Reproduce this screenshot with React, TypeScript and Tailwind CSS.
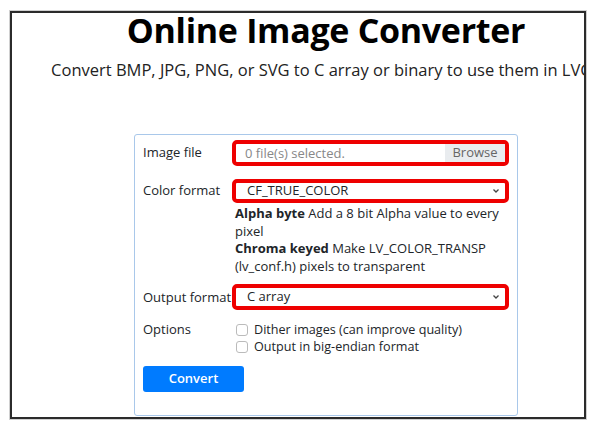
import React from "react";

export default function App() {
  const font = { fontFamily: '"Open Sans", "Noto Sans", sans-serif' };
  return (
    <div className="w-[599px] h-[427px] bg-white relative" style={font}>
      <div className="absolute left-[10px] top-[11px] w-[576px] h-[408px] border-2 border-[#2b2b2b] overflow-hidden bg-white shadow-[0_0_0_1px_#d0d0d0]">
        <div className="w-[628px] flex flex-col items-center text-black">
          <h1 className="text-[34px] font-bold leading-[34px] tracking-[-0.3px]">Online Image Converter</h1>
          <p className="mt-[13px] text-[16.5px] leading-[20px] whitespace-nowrap text-[#222]">
            Convert BMP, JPG, PNG, or SVG to C array or binary to use them in LVGL
          </p>
          <div className="mt-[54px] w-[384px] border border-[#a9c8ea] rounded-[3px] px-[8px] pt-[5px] pb-[23px] text-[13px] text-[#212529]">
            <div className="flex">
              <div className="w-[89px] pt-[3px] leading-[18px]">Image file</div>
              <div className="flex-1 border-[4px] border-[#ee0000] rounded-[5px] h-[26px] flex items-stretch overflow-hidden">
                <div className="flex-1 pl-[9px] text-[#888] leading-[18px] flex items-center">0 file(s) selected.</div>
                <div className="w-[60px] bg-[#e9ecef] text-[#666] flex items-center justify-center">Browse</div>
              </div>
            </div>
            <div className="flex mt-[13px]">
              <div className="w-[89px] pt-[2px] leading-[18px]">Color format</div>
              <div className="flex-1">
                <div className="border-[4px] border-[#ee0000] rounded-[5px] h-[24px] flex items-center pl-[11px] pr-[4px]">
                  <span className="flex-1">CF_TRUE_COLOR</span>
                  <svg width="8" height="6" viewBox="0 0 8 6" className="mr-[1px]"><path d="M1.5 1.5 L4 4 L6.5 1.5" stroke="#444" strokeWidth="1.3" fill="none" /></svg>
                </div>
                <div className="pl-[3px] pt-[2px] leading-[17.5px] pr-[8px]">
                  <div><b className="font-bold">Alpha byte</b> Add a 8 bit Alpha value to every pixel</div>
                  <div><b className="font-bold">Chroma keyed</b> Make LV_COLOR_TRANSP (lv_conf.h) pixels to transparent</div>
                </div>
              </div>
            </div>
            <div className="flex mt-[9px]">
              <div className="w-[89px] pt-[4px] leading-[18px] whitespace-nowrap">Output format</div>
              <div className="flex-1 border-[4px] border-[#ee0000] rounded-[5px] h-[26px] flex items-center pl-[11px] pr-[4px]">
                <span className="flex-1">C array</span>
                <svg width="8" height="6" viewBox="0 0 8 6" className="mr-[1px]"><path d="M1.5 1.5 L4 4 L6.5 1.5" stroke="#444" strokeWidth="1.3" fill="none" /></svg>
              </div>
            </div>
            <div className="flex mt-[11px]">
              <div className="w-[89px] leading-[17px]">Options</div>
              <div className="flex-1 pl-[4px] leading-[17px] text-[12.6px]">
                <label className="flex items-center gap-[6px]">
                  <span className="w-[12px] h-[12px] border border-[#bbb] rounded-[3px] bg-white" />
                  Dither images (can improve quality)
                </label>
                <label className="flex items-center gap-[6px]">
                  <span className="w-[12px] h-[12px] border border-[#bbb] rounded-[3px] bg-white" />
                  Output in big-endian format
                </label>
              </div>
            </div>
            <button className="mt-[11px] w-[101px] h-[26px] bg-[#007bff] text-white rounded-[3px] font-semibold text-[13px]">Convert</button>
          </div>
        </div>
      </div>
    </div>
  );
}
